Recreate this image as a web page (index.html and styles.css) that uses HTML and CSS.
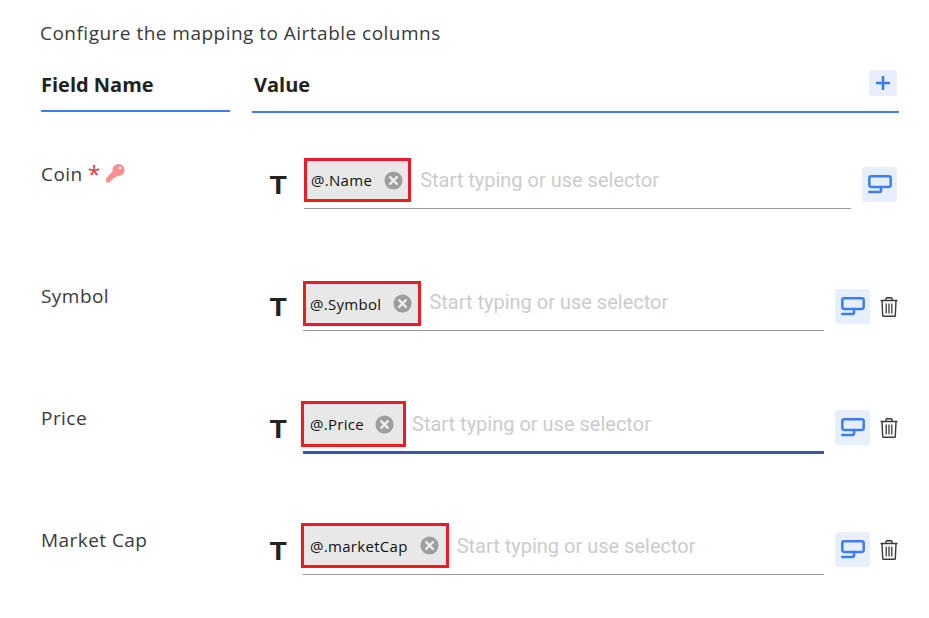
FILE: index.html
```html
<!DOCTYPE html>
<html lang="en">
    <head>
        <meta charset="UTF-8" />
        <title>Airtable mapping</title>
        <link rel="stylesheet" href="styles.css">
    </head>
    <body>
        <svg width="0" height="0" class="defs">
            <symbol id="selector" viewBox="0 0 24 20">
                <rect x="1.300" y="1.300" width="21.400" height="10.600" rx="1.800" fill="none" stroke="currentColor" stroke-width="2.500" />
                <path d="M13 12v3.500q0 1.500-1.500 1.500H1.200" fill="none" stroke="currentColor" stroke-width="2.500" stroke-linecap="round" />
            </symbol>
            <symbol id="trash" viewBox="0 0 18 20">
                <path d="M.5 3.500h17M6 3V1.500q0-.8.8-.8h4.400q.8 0 .8.8V3M2 3.500l.7 15q0 .8.8.8h11q.8 0 .8-.8l.7-15" fill="none" stroke="currentColor" stroke-width="1.400" />
                <path d="M6.200 6.500v10M9 6.500v10M11.800 6.500v10" fill="none" stroke="currentColor" stroke-width="1.300" />
            </symbol>
            <symbol id="clear" viewBox="0 0 20 20">
                <circle cx="10" cy="10" r="9.500" fill="#9e9e9e" />
                <path d="M6.500 6.500l7 7M13.500 6.500l-7 7" stroke="#eee" stroke-width="2.400" stroke-linecap="round" />
            </symbol>
        </svg>
        <main>
            <p class="intro">Configure the mapping to Airtable columns</p>
            <div class="head">
                <div class="head-name">Field Name</div>
                <div class="head-value">
                    <span>Value</span>
                    <button class="add">
                        <svg width="14" height="14" viewBox="0 0 14 14"><path d="M7 .5v13M.5 7h13" stroke="currentColor" stroke-width="2.600" stroke-linecap="round" /></svg>
                    </button>
                </div>
            </div>

            <div class="row first">
                <div class="label">Coin <span class="req">*</span>
                    <svg class="key" width="19" height="19" viewBox="0 0 19 19"><circle cx="12.500" cy="6" r="6" fill="#ff8f8f" /><path d="M8.500 5.500L.6 13.800q-.6.600-.6 1.400v2.300q0 1 1 1h2.500q.8 0 1-.8l.4-1.400h1.500l.6-2 2-.6 3-2.500z" fill="#ff8f8f" /><circle cx="14" cy="4" r="1.300" fill="#fff" /></svg>
                </div>
                <div class="type">T</div>
                <div class="field">
                    <span class="chip chip-name">@.Name<svg class="x" width="19" height="19"><use href="#clear" /></svg></span>
                    <span class="hint">Start typing or use selector</span>
                </div>
                <div class="actions">
                    <button class="pick"><svg width="24" height="20"><use href="#selector" /></svg></button>
                </div>
            </div>

            <div class="row">
                <div class="label">Symbol</div>
                <div class="type">T</div>
                <div class="field">
                    <span class="chip chip-symbol">@.Symbol<svg class="x" width="19" height="19"><use href="#clear" /></svg></span>
                    <span class="hint">Start typing or use selector</span>
                </div>
                <div class="actions">
                    <button class="pick"><svg width="24" height="20"><use href="#selector" /></svg></button>
                    <svg class="del" width="18" height="20"><use href="#trash" /></svg>
                </div>
            </div>

            <div class="row">
                <div class="label">Price</div>
                <div class="type">T</div>
                <div class="field active">
                    <span class="chip chip-price">@.Price<svg class="x" width="19" height="19"><use href="#clear" /></svg></span>
                    <span class="hint">Start typing or use selector</span>
                </div>
                <div class="actions up">
                    <button class="pick"><svg width="24" height="20"><use href="#selector" /></svg></button>
                    <svg class="del" width="18" height="20"><use href="#trash" /></svg>
                </div>
            </div>

            <div class="row">
                <div class="label">Market Cap</div>
                <div class="type">T</div>
                <div class="field">
                    <span class="chip chip-cap">@.marketCap<svg class="x" width="19" height="19"><use href="#clear" /></svg></span>
                    <span class="hint">Start typing or use selector</span>
                </div>
                <div class="actions up">
                    <button class="pick"><svg width="24" height="20"><use href="#selector" /></svg></button>
                    <svg class="del" width="18" height="20"><use href="#trash" /></svg>
                </div>
            </div>
        </main>
    </body>
</html>
```

FILE: styles.css
```css
* {
    box-sizing: border-box;
}
body {
    margin: 0;
    background-color: #fff;
    color: #3a3a3a;
    font-family: "Open Sans", Arial, sans-serif;
}
.defs {
    display: block;
    height: 0;
}
main {
    width: 899px;
    padding: 20px 0 0 41px;
}
.intro {
    margin: 0 0 0 -1px;
    font-size: 19px;
    line-height: 26px;
    letter-spacing: 0.48px;
}
.head {
    display: flex;
    gap: 22px;
    margin-top: 13px;
    font-size: 20px;
    font-weight: 700;
    color: #222;
}
.head-name {
    width: 189px;
    height: 53px;
    padding-top: 13px;
    line-height: 26px;
    border-bottom: 2px solid #3b7fee;
}
.head-value {
    display: flex;
    flex: 1;
    height: 54px;
    padding: 13px 2px 0 2px;
    line-height: 26px;
    border-bottom: 2px solid #3b7fee;
    justify-content: space-between;
}
.add {
    display: flex;
    width: 28px;
    height: 26px;
    margin-top: -2px;
    padding: 0;
    border: 0;
    border-radius: 3px;
    background-color: #e7effc;
    color: #3b7fee;
    align-items: center;
    justify-content: center;
}
.row {
    display: flex;
    height: 122px;
    align-items: flex-start;
}
.row.first {
    margin-top: 46px;
}
.label {
    display: flex;
    width: 229px;
    padding-top: 2px;
    gap: 5px;
    font-size: 19px;
    line-height: 26px;
    letter-spacing: 0.45px;
}
.req {
    font-size: 23px;
    color: #e8334a;
}
.key {
    margin-top: 3px;
    margin-left: 0;
}
.type {
    width: 33px;
    padding-top: 13px;
    font-family: Inter, sans-serif;
    font-size: 24px;
    line-height: 28px;
    font-weight: 700;
    color: #222;
    transform: translateX(-1px) scaleX(1.15);
    transform-origin: left;
}
.first .type {
    width: 34px;
}
.field {
    display: flex;
    flex: 1;
    height: 50px;
    border-bottom: 1px solid #999;
    align-items: flex-start;
}
.field.active {
    height: 51px;
    border-bottom: 3px solid #3f51b5;
}
.chip {
    display: flex;
    height: 45px;
    padding: 0 4px 0 4px;
    border: 3px solid #ed1c24;
    background-color: #e8e8e8;
    font-size: 15px;
    font-weight: 500;
    letter-spacing: 0.3px;
    color: #111;
    align-items: center;
    gap: 12px;
}
/* the red boxes are drawn by hand on the capture, none of them sits the same */
.chip-name {
    height: 44px;
    margin-top: -1px;
    padding-right: 5px;
}
.chip-symbol {
    padding-right: 6px;
}
.chip-price {
    height: 46px;
    margin: -2px 0 0 -2px;
    padding: 0 9px 0 6px;
    gap: 11px;
}
.chip-cap {
    margin: -2px 0 0 -2px;
    padding: 0 7px 0 6px;
}
.hint {
    margin: 8px 0 0 9px;
    font-family: Roboto, sans-serif;
    font-size: 20px;
    line-height: 26px;
    color: #ccc;
}
.chip-symbol + .hint {
    margin-left: 8px;
}
.chip-price + .hint {
    margin-left: 6px;
}
.chip-cap + .hint {
    margin-left: 8px;
}
.actions {
    display: flex;
    width: 75px;
    padding: 8px 0 0 11px;
    gap: 10px;
    align-items: center;
}
.actions.up {
    padding-top: 7px;
}
.first .actions {
    width: 48px;
    padding-top: 8px;
}
.pick {
    display: flex;
    width: 35px;
    height: 35px;
    padding: 0;
    border: 0;
    border-radius: 3px;
    background-color: #e7effc;
    color: #3b7fee;
    align-items: center;
    justify-content: center;
}
.del {
    color: #3a3a3a;
}
```
